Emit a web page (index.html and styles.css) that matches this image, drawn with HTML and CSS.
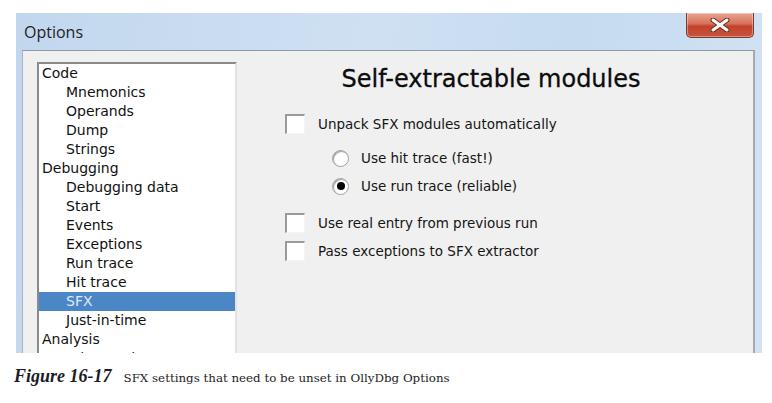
FILE: index.html
```html
<!DOCTYPE html>
<html>
<head>
<meta charset="utf-8">
<link rel="stylesheet" href="styles.css">
</head>
<body>
<div class="shot">
  <div class="window">
    <div class="titlebar">
      <span class="title">Options</span>
      <div class="close">
        <svg width="22" height="14" viewBox="0 0 22 14"><path d="M4 2 L18 12 M18 2 L4 12" stroke="#6a2a20" stroke-width="5" stroke-linecap="round"/><path d="M4 2 L18 12 M18 2 L4 12" stroke="#ffffff" stroke-width="3" stroke-linecap="round"/></svg>
      </div>
    </div>
    <div class="client">
      <div class="tree">
        <div class="item top">Code</div>
        <div class="item child">Mnemonics</div>
        <div class="item child">Operands</div>
        <div class="item child">Dump</div>
        <div class="item child">Strings</div>
        <div class="item top">Debugging</div>
        <div class="item child">Debugging data</div>
        <div class="item child">Start</div>
        <div class="item child">Events</div>
        <div class="item child">Exceptions</div>
        <div class="item child">Run trace</div>
        <div class="item child">Hit trace</div>
        <div class="item child selected">SFX</div>
        <div class="item child">Just-in-time</div>
        <div class="item top">Analysis</div>
        <div class="item child">Advanced</div>
      </div>
      <div class="panel">
        <h1 class="heading">Self-extractable modules</h1>
        <div class="opt check first"><span class="box"></span><span>Unpack SFX modules automatically</span></div>
        <div class="opt radio r1"><span class="circle"></span><span>Use hit trace (fast!)</span></div>
        <div class="opt radio r2"><span class="circle on"></span><span>Use run trace (reliable)</span></div>
        <div class="opt check c2"><span class="box"></span><span>Use real entry from previous run</span></div>
        <div class="opt check c3"><span class="box"></span><span>Pass exceptions to SFX extractor</span></div>
      </div>
    </div>
  </div>
</div>
<p class="caption"><span class="fig">Figure 16-17</span><span class="ctext">SFX settings that need to be unset in OllyDbg Options</span></p>
</body>
</html>
```
FILE: styles.css
```css
html, body {
  margin: 0;
  padding: 0;
  background: #ffffff;
}
.shot {
  height: 353px;
  overflow: hidden;
  padding-top: 13px;
  box-sizing: border-box;
}
.window {
  margin-left: 16px;
  width: 746px;
  height: 340px;
  background: linear-gradient(100deg, #c2d7ee 0%, #cfe0f2 45%, #c6dbf0 70%, #d3e3f3 100%);
  display: flex;
  flex-direction: column;
  overflow: hidden;
}
.titlebar {
  height: 37px;
  display: flex;
  align-items: flex-start;
  justify-content: space-between;
  flex: none;
}
.title {
  font-family: "Open Sans", "Noto Sans", sans-serif;
  font-size: 16px;
  color: #1e1e1e;
  margin-left: 8px;
  margin-top: 8px;
}
.close {
  width: 66px;
  height: 24px;
  margin-right: 8px;
  border: 1px solid #7a3b30;
  border-top: none;
  border-radius: 0 0 5px 5px;
  background: linear-gradient(#e8a592 0%, #d7705a 45%, #c2412a 55%, #c8553c 100%);
  display: flex;
  align-items: center;
  justify-content: center;
  box-shadow: inset 0 0 0 1px rgba(255,255,255,0.35);
}
.client {
  flex: 1;
  margin: 0 7px 0 6px;
  background: #f0f0f0;
  border-top: 1px solid #8e9aa8;
  border-left: 1px solid #a8b4c2;
  border-right: 2px solid #a6a9ad;
  display: flex;
  align-items: flex-start;
}
.tree {
  margin-left: 14px;
  margin-top: 11px;
  width: 196px;
  height: 320px;
  background: #ffffff;
  border-top: 2px solid #8a8a8a;
  border-left: 2px solid #8a8a8a;
  border-right: 2px solid #e3e3e3;
  padding-top: 0;
  font-family: "DejaVu Sans", sans-serif;
  font-size: 14px;
  color: #111111;
  flex: none;
}
.item {
  height: 19px;
  line-height: 19px;
  white-space: nowrap;
}
.top {
  padding-left: 3px;
}
.child {
  padding-left: 27px;
}
.selected {
  background: #4b86c6;
  color: #dfe9f5;
}
.panel {
  flex: 1;
  font-family: "DejaVu Sans", sans-serif;
  font-size: 13.5px;
  color: #151515;
}
.heading {
  margin: 13px 0 0 0;
  font-family: "DejaVu Sans", sans-serif;
  font-weight: normal;
  font-size: 24px;
  line-height: 30px;
  text-align: center;
  padding-right: 8px;
  color: #0c0c0c;
  -webkit-text-stroke: 0.3px #0c0c0c;
}
.opt {
  display: flex;
  align-items: center;
  height: 20px;
}
.check {
  padding-left: 48px;
  gap: 13px;
}
.radio {
  padding-left: 95px;
  gap: 12px;
}
.first { margin-top: 20px; }
.r1 { margin-top: 14px; }
.r2 { margin-top: 8px; }
.c2 { margin-top: 17px; }
.c3 { margin-top: 8px; }
.box {
  width: 17px;
  height: 17px;
  background: #ffffff;
  border-top: 2px solid #9a9a9a;
  border-left: 2px solid #9a9a9a;
  border-right: 1px solid #f4f4f4;
  border-bottom: 1px solid #f4f4f4;
  flex: none;
}
.circle {
  width: 15px;
  height: 15px;
  border-radius: 50%;
  background: #ffffff;
  border: 1px solid #a0a0a0;
  box-shadow: inset 1px 1px 1px #9a9a9a;
  position: relative;
  flex: none;
}
.circle.on::after {
  content: "";
  position: absolute;
  left: 3.5px;
  top: 3.5px;
  width: 8px;
  height: 8px;
  border-radius: 50%;
  background: #000000;
}
.caption {
  margin: 13px 0 0 14px;
  font-family: "DejaVu Serif", serif;
  color: #222222;
  white-space: nowrap;
}
.fig {
  font-family: "Liberation Serif", serif;
  font-weight: bold;
  font-style: italic;
  font-size: 18px;
  color: #1c1c28;
  margin-right: 12px;
}
.ctext {
  font-size: 11.85px;
}
```
